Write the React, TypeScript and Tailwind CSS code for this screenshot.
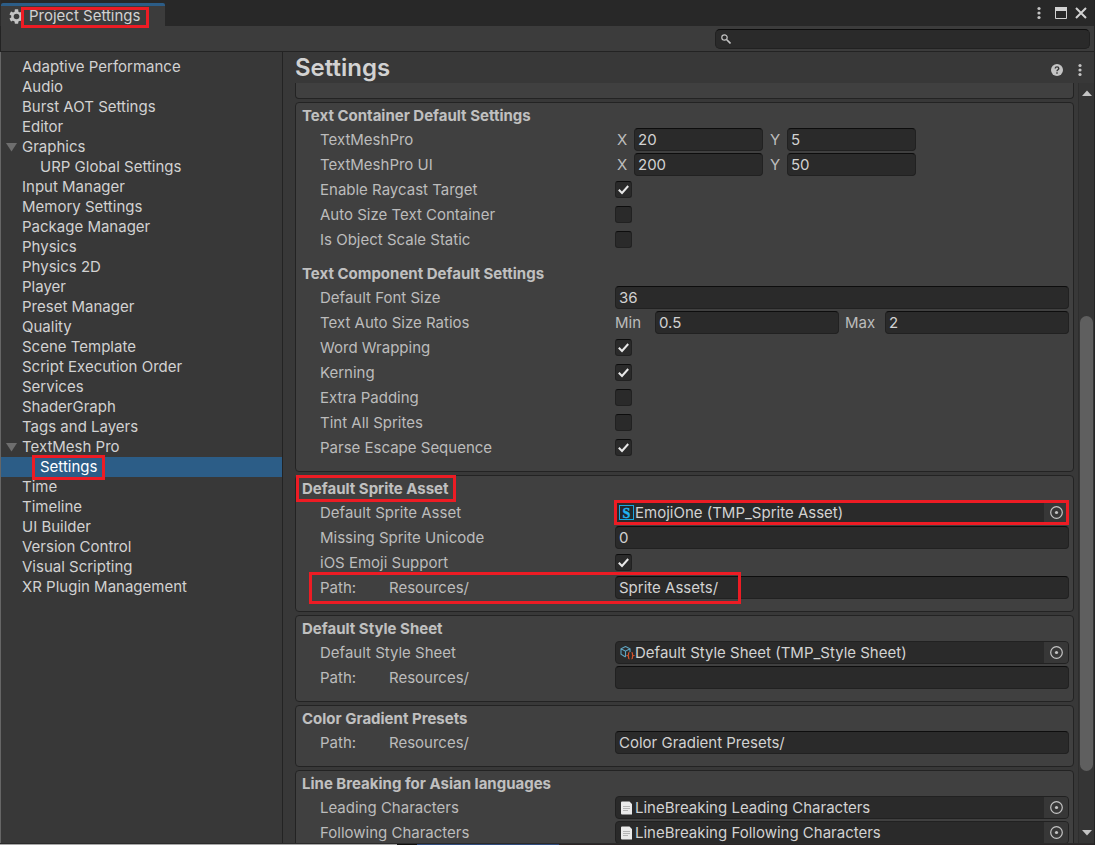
import React from 'react';
import clsx from 'clsx';

interface NavItem {
    label: string;
    foldout?: boolean;
    child?: boolean;
    selected?: boolean;
}

const navItems: NavItem[] = [
    { label: 'Adaptive Performance' },
    { label: 'Audio' },
    { label: 'Burst AOT Settings' },
    { label: 'Editor' },
    { label: 'Graphics', foldout: true },
    { label: 'URP Global Settings', child: true },
    { label: 'Input Manager' },
    { label: 'Memory Settings' },
    { label: 'Package Manager' },
    { label: 'Physics' },
    { label: 'Physics 2D' },
    { label: 'Player' },
    { label: 'Preset Manager' },
    { label: 'Quality' },
    { label: 'Scene Template' },
    { label: 'Script Execution Order' },
    { label: 'Services' },
    { label: 'ShaderGraph' },
    { label: 'Tags and Layers' },
    { label: 'TextMesh Pro', foldout: true },
    { label: 'Settings', child: true, selected: true },
    { label: 'Time' },
    { label: 'Timeline' },
    { label: 'UI Builder' },
    { label: 'Version Control' },
    { label: 'Visual Scripting' },
    { label: 'XR Plugin Management' },
];

const inputClass =
    'h-[23px] min-w-0 rounded-[4px] border border-[#212121] border-t-[#0d0d0d] bg-[#2a2a2a] px-[3px] text-[#d2d2d2] outline-none';

/* Red call-out frame laid over whatever it is placed in */
function Highlight({ className }: { className: string }) {
    return <div className={clsx('pointer-events-none absolute z-10 border-3 border-[#ed1c24]', className)} />;
}

function DotsIcon() {
    return (
        <svg width="4" height="14" viewBox="0 0 4 14" fill="#c4c4c4">
            <circle cx="2" cy="2.5" r="1.6" />
            <circle cx="2" cy="7" r="1.6" />
            <circle cx="2" cy="11.5" r="1.6" />
        </svg>
    );
}

function GearIcon() {
    return (
        <svg width="15" height="15" viewBox="0 0 15 15" className="shrink-0">
            <g fill="#c4c4c4">
                <rect x="5.7" y="0.3" width="3.6" height="14.4" rx="0.6" />
                <rect x="5.7" y="0.3" width="3.6" height="14.4" rx="0.6" transform="rotate(60 7.5 7.5)" />
                <rect x="5.7" y="0.3" width="3.6" height="14.4" rx="0.6" transform="rotate(120 7.5 7.5)" />
                <circle cx="7.5" cy="7.5" r="5.3" />
            </g>
            <circle cx="7.5" cy="7.5" r="2.8" fill="#3c3c3c" />
        </svg>
    );
}

function SpriteIcon() {
    return (
        <svg width="16" height="16" viewBox="0 0 16 16" className="shrink-0">
            <rect x="0.5" y="0.5" width="14" height="14" fill="#20282c" stroke="#19a5e1" />
            <text x="7.5" y="12.5" textAnchor="middle" fontFamily="Liberation Serif, serif" fontWeight="700" fontSize="14" fill="#1fb5f5" stroke="#1fb5f5" strokeWidth="0.4">
                S
            </text>
        </svg>
    );
}

function ScriptableIcon() {
    return (
        <svg width="16" height="16" viewBox="0 0 16 16" fill="none" className="shrink-0">
            <path d="M6.5 1.5 11 3.8V7M6.5 1.5 2 3.8v5.4l4.5 2.8M2 3.8l4.5 2.4L11 3.8M6.5 6.2V12" stroke="#5fa3c0" strokeWidth="1.1" />
            <path d="M10.5 7.5c-1.2 0-.9.9-.9 1.7s-.2 1.2-.9 1.4c.7.2.9.6.9 1.4s-.3 1.8.9 1.8M12.5 7.5c1.2 0 .9.9.9 1.7s.2 1.2.9 1.4c-.7.2-.9.6-.9 1.4s.3 1.8-.9 1.8" stroke="#d4532b" strokeWidth="1.2" />
        </svg>
    );
}

function TextAssetIcon() {
    return (
        <svg width="16" height="16" viewBox="0 0 16 16" className="shrink-0">
            <path d="M3 1.5h7.5l2.5 2.5v10.5H3a1 1 0 0 1-1-1v-11a1 1 0 0 1 1-1z" fill="#eaeaea" />
            <path d="M4 6.5h7M4 8.5h7M4 10.5h5" stroke="#b4b4b4" strokeWidth="1" />
        </svg>
    );
}

function Section({ title, children, className }: { title: string; children: React.ReactNode; className?: string }) {
    return (
        <section className={clsx('rounded-[4px] border border-[#232323] bg-[#404040] pr-1 pb-[11px] pl-1.5', className)}>
            <Title>{title}</Title>
            {children}
        </section>
    );
}

function Title({ children, className }: { children: React.ReactNode; className?: string }) {
    return <h2 className={clsx('h-6 pt-px leading-6 font-bold text-[#c0c0c0]', className)}>{children}</h2>;
}

function Row({ label, id, children }: { label: React.ReactNode; id?: string; children: React.ReactNode }) {
    return (
        <div className="flex h-[25px] items-center pl-[18px]">
            <label htmlFor={id} className="flex w-[295px] shrink-0">
                {label}
            </label>
            {children}
        </div>
    );
}

function CheckRow({ label, checked = false }: { label: string; checked?: boolean }) {
    const id = label.toLowerCase().replace(/ /g, '-');
    return (
        <Row label={label} id={id}>
            <span className="relative flex size-[17px]">
                <input
                    id={id}
                    type="checkbox"
                    defaultChecked={checked}
                    className="peer size-[17px] appearance-none rounded-[3px] border border-[#212121] border-t-[#0d0d0d] bg-[#2a2a2a]"
                />
                <svg viewBox="0 0 17 17" className="pointer-events-none absolute inset-0 hidden size-[17px] peer-checked:block" fill="none">
                    <path d="M3.8 8.8 7 12l6.2-7" stroke="#e8e8e8" strokeWidth="2" />
                </svg>
            </span>
        </Row>
    );
}

function TextRow({ label, value }: { label: string; value: string }) {
    const id = label.toLowerCase().replace(/ /g, '-');
    return (
        <Row label={label} id={id}>
            <input id={id} defaultValue={value} className={clsx(inputClass, 'flex-1')} />
        </Row>
    );
}

function PathRow({ id, value }: { id: string; value: string }) {
    return (
        <Row
            id={id}
            label={
                <>
                    <span className="w-[69px]">Path:</span>
                    <span>Resources/</span>
                </>
            }
        >
            <input id={id} defaultValue={value} className={clsx(inputClass, 'flex-1')} />
        </Row>
    );
}

function VectorRow({ label, x, y }: { label: string; x: string; y: string }) {
    return (
        <Row label={label}>
            <div className="flex gap-[5px]">
                {[['X', x], ['Y', y]].map(([axis, value]) => (
                    <label key={axis} className="flex items-center">
                        <span className="w-[19px] pl-0.5">{axis}</span>
                        <input defaultValue={value} className={clsx(inputClass, 'w-[129px]')} />
                    </label>
                ))}
            </div>
        </Row>
    );
}

function ObjectRow({ label, value, icon, highlighted }: { label: string; value: string; icon: React.ReactNode; highlighted?: boolean }) {
    return (
        <Row label={label}>
            <div className="relative flex h-[23px] min-w-0 flex-1 items-center rounded-[4px] border border-[#212121] bg-[#2a2a2a] pl-[3px] text-[#d2d2d2]">
                {icon}
                <span className="flex-1 truncate">{value}</span>
                <button aria-label={`Select ${label}`} className="flex h-[21px] w-6 items-center justify-center rounded-r-[3px] bg-[#373737]">
                    <svg width="15" height="15" viewBox="0 0 15 15" fill="none">
                        <circle cx="7.5" cy="7.5" r="5.8" stroke="#c4c4c4" strokeWidth="1.2" />
                        <circle cx="7.5" cy="7.5" r="1.6" fill="#c4c4c4" />
                    </svg>
                </button>
                {highlighted && <Highlight className="-inset-y-0.5 -right-px -left-0.5" />}
            </div>
        </Row>
    );
}

function Sidebar() {
    return (
        <nav className="w-[282px] shrink-0 border-r border-[#232323] pt-[5px] text-[#d2d2d2]">
            {navItems.map((item) => (
                <a
                    key={item.label}
                    href="#"
                    className={clsx('flex h-5 items-center', item.child ? 'pl-[39px]' : item.foldout ? 'pl-[5px]' : 'pl-[21px]', item.selected && 'bg-[#2c5d87] text-white')}
                >
                    {item.foldout && (
                        <svg width="16" height="10" viewBox="0 0 16 10" fill="#6e6e6e">
                            <path d="M0 1h11L5.5 9.5z" />
                        </svg>
                    )}
                    <span className="relative">
                        {item.label}
                        {item.selected && <Highlight className="-inset-x-2 -top-0.5 -bottom-[3px]" />}
                    </span>
                </a>
            ))}
        </nav>
    );
}

function Scrollbar() {
    return (
        <div className="flex w-4 shrink-0 flex-col items-center border-l border-[#2e2e2e] bg-[#353535]">
            <svg width="10" height="20" viewBox="0 0 10 20" fill="#c4c4c4">
                <path d="M0 13h10L5 7.5z" />
            </svg>
            <div className="flex w-full flex-1 flex-col items-center">
                <div className="basis-[213px]" />
                <div className="w-[13px] grow rounded-full bg-[#5f5f5f]" />
                <div className="basis-[52px]" />
            </div>
            <svg width="10" height="20" viewBox="0 0 10 20" fill="#c4c4c4">
                <path d="M0 7h10L5 12.5z" />
            </svg>
        </div>
    );
}

export default function App() {
    return (
        <div className="flex h-screen flex-col overflow-hidden border-r border-[#232323] bg-[#383838] font-['Inter',sans-serif] text-[15px] leading-5 text-[#bcbcbc]">
            <header className="flex h-[26px] shrink-0 items-end border-l border-[#2b2b2b] bg-[#282828]">
                <div className="relative flex h-[23px] w-[164px] items-center rounded-t-[2px] border-t-3 border-[#2c5d87] bg-[#3c3c3c] pl-2 text-[#d2d2d2]">
                    <GearIcon />
                    <span className="pl-[5px]">Project Settings</span>
                    <Highlight className="top-px -bottom-0.5 left-5 w-32" />
                </div>
                <div className="ml-auto flex h-full items-center gap-2 pr-[7px]">
                    <button aria-label="Menu" className="mr-1.5">
                        <DotsIcon />
                    </button>
                    <button aria-label="Maximize">
                        <svg width="12" height="12" viewBox="0 0 12 12" fill="none">
                            <path d="M.5.5h11v11H.5z" stroke="#d2d2d2" />
                            <path d="M0 0h12v4H0z" fill="#d2d2d2" />
                        </svg>
                    </button>
                    <button aria-label="Close">
                        <svg width="12" height="12" viewBox="0 0 12 12" fill="none">
                            <path d="m1 1 10 10M11 1 1 11" stroke="#d2d2d2" strokeWidth="2" />
                        </svg>
                    </button>
                </div>
            </header>

            <div className="flex h-[26px] shrink-0 items-center justify-end border-b border-l border-[#232323] bg-[#3c3c3c] pr-1">
                <label className="flex h-5 w-[375px] items-center rounded-[5px] border border-[#212121] border-t-[#0d0d0d] bg-[#2a2a2a] pl-[5px]">
                    <svg width="10" height="10" viewBox="0 0 10 10" fill="none" stroke="#c4c4c4">
                        <circle cx="3.5" cy="3.5" r="2.7" strokeWidth="1.2" />
                        <path d="m5.5 5.5 4 4" strokeWidth="1.6" />
                    </svg>
                    <input aria-label="Search" className="min-w-0 flex-1 px-1 outline-none" />
                </label>
            </div>

            <div className="flex min-h-0 flex-1 border-l border-[#666]">
                <Sidebar />
                <main className="flex min-w-0 flex-1 flex-col">
                    <div className="flex h-[31px] shrink-0 items-center pr-3 pl-3">
                        <h1 className="text-2xl font-semibold text-[#d2d2d2]">Settings</h1>
                        <div className="ml-auto flex items-center gap-[15px] pt-1">
                            <button aria-label="Help">
                                <svg width="12" height="12" viewBox="0 0 12 12" fill="none">
                                    <circle cx="6" cy="6" r="6" fill="#c4c4c4" />
                                    <path d="M4.2 4.6c0-2.3 3.6-2.3 3.6 0 0 1.2-1.8 1.2-1.8 2.6M6 8.2v1.5" stroke="#383838" strokeWidth="1.4" />
                                </svg>
                            </button>
                            <button aria-label="Options">
                                <DotsIcon />
                            </button>
                        </div>
                    </div>

                    <div className="flex min-h-0 flex-1">
                        <div className="flex min-w-0 flex-1 flex-col gap-[3px] overflow-hidden pr-1 pl-3">
                            {/* Tail of the group scrolled out above */}
                            <div className="h-4 shrink-0 rounded-b-[4px] border border-t-0 border-[#232323] bg-[#404040]" />

                            <Section title="Text Container Default Settings">
                                <VectorRow label="TextMeshPro" x="20" y="5" />
                                <VectorRow label="TextMeshPro UI" x="200" y="50" />
                                <CheckRow label="Enable Raycast Target" checked />
                                <CheckRow label="Auto Size Text Container" />
                                <CheckRow label="Is Object Scale Static" />

                                <Title className="mt-[9px]">Text Component Default Settings</Title>
                                <TextRow label="Default Font Size" value="36" />
                                <Row label="Text Auto Size Ratios">
                                    <div className="flex min-w-0 flex-1 gap-1.5">
                                        {[['Min', '0.5'], ['Max', '2']].map(([name, value]) => (
                                            <label key={name} className="flex min-w-0 flex-1 items-center">
                                                <span className="w-10 shrink-0">{name}</span>
                                                <input defaultValue={value} className={clsx(inputClass, 'w-full')} />
                                            </label>
                                        ))}
                                    </div>
                                </Row>
                                <CheckRow label="Word Wrapping" checked />
                                <CheckRow label="Kerning" checked />
                                <CheckRow label="Extra Padding" />
                                <CheckRow label="Tint All Sprites" />
                                <CheckRow label="Parse Escape Sequence" checked />
                            </Section>

                            <Section title="Default Sprite Asset" className="relative">
                                <Highlight className="-top-px left-0 h-[27px] w-40" />
                                <ObjectRow label="Default Sprite Asset" value="EmojiOne (TMP_Sprite Asset)" icon={<SpriteIcon />} highlighted />
                                <TextRow label="Missing Sprite Unicode" value="0" />
                                <CheckRow label="iOS Emoji Support" checked />
                                <div className="relative">
                                    <PathRow id="sprite-path" value="Sprite Assets/" />
                                    <Highlight className="-top-[3px] -bottom-1 left-[7px] w-[432px]" />
                                </div>
                            </Section>

                            <Section title="Default Style Sheet">
                                <ObjectRow label="Default Style Sheet" value="Default Style Sheet (TMP_Style Sheet)" icon={<ScriptableIcon />} />
                                <PathRow id="style-path" value="" />
                            </Section>

                            <Section title="Color Gradient Presets">
                                <PathRow id="gradient-path" value="Color Gradient Presets/" />
                            </Section>

                            <Section title="Line Breaking for Asian languages">
                                <ObjectRow label="Leading Characters" value="LineBreaking Leading Characters" icon={<TextAssetIcon />} />
                                <ObjectRow label="Following Characters" value="LineBreaking Following Characters" icon={<TextAssetIcon />} />
                            </Section>
                        </div>
                        <Scrollbar />
                    </div>
                </main>
            </div>

            {/* Sliver of the windows underneath */}
            <div className="flex h-0.5 shrink-0 border-t border-[#2b2b2b] bg-[#2b2627]">
                <div className="w-[397px] bg-[#a8a8a8]" />
                <div className="w-5 bg-[#111]" />
                <div className="w-[142px] bg-[#2f4a7c]" />
            </div>
        </div>
    );
}
